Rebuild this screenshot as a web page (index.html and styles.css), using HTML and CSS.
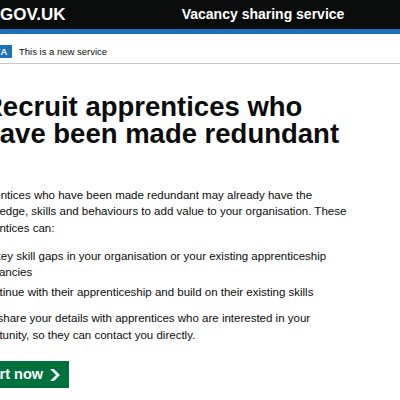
FILE: index.html
```html
<!DOCTYPE html>
<html lang="en">

<head>
    <meta charset="UTF-8">
    <meta name="viewport" content="width=device-width, initial-scale=1.0">
    <title>Recruit apprentices who have been made redundant - Vacancy sharing service - GOV.UK</title>
    <link rel="stylesheet" href="styles.css">
</head>

<body>
    <header class="header">
        <div class="header-inner width-container">
            <div class="header-logo">
                <a href="/" class="header-home">
                    <svg class="header-crown" viewBox="0 0 26 18" width="26" height="18" aria-hidden="true">
                        <path fill="currentColor" d="M2 16h22l1-11-6 5-6-8-6 8-6-5z"/>
                    </svg>
                    <span>GOV.UK</span>
                </a>
            </div>
            <div class="header-content">
                <a href="/" class="service-name">Vacancy sharing service</a>
            </div>
        </div>
    </header>

    <div class="phase-banner">
        <div class="phase-inner width-container">
            <strong class="phase-tag">Beta</strong>
            <span class="phase-text">This is a new service</span>
        </div>
    </div>

    <main class="main width-container">
        <h1 class="heading">Recruit apprentices who have been made redundant</h1>

        <p class="body-text">Apprentices who have been made redundant may already have the knowledge, skills and behaviours to add value to your organisation. These apprentices can:</p>

        <ul class="bullet-list">
            <li>fill key skill gaps in your organisation or your existing apprenticeship vacancies</li>
            <li>continue with their apprenticeship and build on their existing skills</li>
        </ul>

        <p class="body-text body-text--last">We'll share your details with apprentices who are interested in your opportunity, so they can contact you directly.</p>

        <a href="/start" role="button" class="start-button">
            Start now
            <svg class="start-icon" viewBox="0 0 33 40" width="10" height="12" aria-hidden="true">
                <path fill="currentColor" d="M0 0h13l20 20-20 20H0l20-20z"/>
            </svg>
        </a>
    </main>
</body>

</html>
```
FILE: styles.css
```css
body {
    margin: 0;
    padding: 0;
    background-color: #ffffff;
    color: #0b0c0c;
    font-family: "Liberation Sans", Arial, sans-serif;
}

a {
    color: inherit;
    text-decoration: none;
}

.width-container {
    width: 386px;
    margin-left: -30px;
}

/* header */

.header {
    background-color: #0b0c0c;
    color: #ffffff;
    border-bottom: 5px solid #1d70b8;
}

.header-inner {
    display: flex;
    height: 29px;
}

.header-logo {
    width: 211.7px;
    flex-shrink: 0;
}

.header-home {
    display: flex;
    align-items: center;
    gap: 4px;
    font-size: 17px;
    font-weight: bold;
    line-height: 29px;
}

.header-crown {
    display: block;
}

.service-name {
    font-size: 14px;
    font-weight: bold;
    line-height: 29px;
}

/* phase banner */

.phase-banner {
    border-bottom: 1px solid #c3c6c8;
}

.phase-inner {
    display: flex;
    align-items: center;
    gap: 7px;
    padding: 11px 0 5px;
}

.phase-tag {
    margin-left: 6px;
    padding: 0 4px;
    background-color: #1d70b8;
    color: #ffffff;
    font-size: 9.5px;
    line-height: 13px;
    letter-spacing: 0.7px;
    text-transform: uppercase;
}

.phase-text {
    font-size: 9.5px;
    line-height: 13px;
}

/* content */

.heading {
    margin: 30px 0 0 13px;
    font-size: 27.5px;
    line-height: 26.5px;
    font-weight: bold;
}

.body-text {
    margin: 39.5px 0 11px;
    font-size: 11.5px;
    line-height: 16.7px;
}

.body-text--last {
    margin: 0 0 17px;
}

.bullet-list {
    margin: 0 0 10px;
    padding-left: 11px;
    font-size: 11.5px;
    line-height: 16.7px;
}

.bullet-list li {
    margin-bottom: 2.5px;
}

.start-button {
    display: inline-flex;
    align-items: center;
    gap: 7px;
    padding: 5.3px 9px 4.3px 7px;
    background-color: #00703c;
    color: #ffffff;
    box-shadow: 0 2px 0 #002d18;
    font-size: 14.5px;
    font-weight: bold;
    line-height: 17.4px;
}

.start-icon {
    display: block;
}
```
